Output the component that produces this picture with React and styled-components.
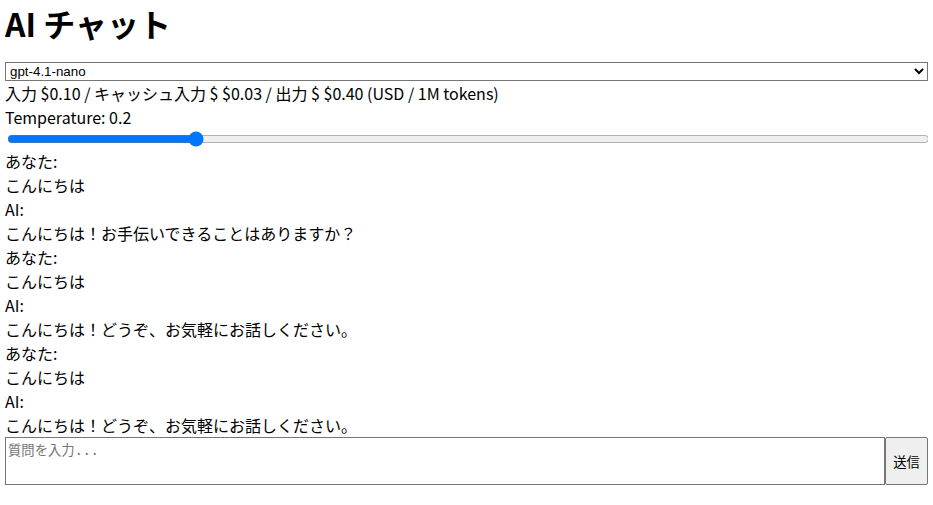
import React, { useState } from "react";
import styled, { createGlobalStyle } from "styled-components";

const GlobalStyle = createGlobalStyle`
  body {
    margin: 5px;
    font-family: "Noto Sans CJK JP", "Noto Sans", sans-serif;
    font-size: 16px;
    color: #000;
    background: #fff;
  }
`;

const Page = styled.div`
  display: flex;
  flex-direction: column;
`;

const Title = styled.h1`
  font-size: 32px;
  font-weight: 700;
  line-height: 36px;
  margin: 0 0 21px 0;
`;

const ModelSelect = styled.select`
  width: 100%;
  height: 19px;
  font-family: "Liberation Sans", Arial, sans-serif;
  font-size: 13.33px;
  border: 1px solid #767676;
  border-radius: 0;
  background: #fff;
  padding: 0;
`;

const Line = styled.div`
  line-height: 24px;
`;

const Slider = styled.input`
  width: 100%;
  margin: 2px;
  accent-color: #0075ff;
`;

const Chat = styled.div`
  height: 288px;
  overflow-y: auto;
`;

const Composer = styled.div`
  display: flex;
`;

const Input = styled.textarea`
  flex: 1;
  height: 48px;
  box-sizing: border-box;
  resize: none;
  border: 1px solid #767676;
  padding: 2px;
  font-family: "DejaVu Sans Mono", "Noto Sans CJK JP", monospace;
  font-size: 13.33px;
  &::placeholder {
    color: #757575;
  }
`;

const SendButton = styled.button`
  width: 43px;
  height: 48px;
  border: 1px solid #767676;
  border-radius: 2px;
  background: #efefef;
  font-family: "Noto Sans CJK JP", sans-serif;
  font-size: 13.33px;
  padding: 0;
`;

const messages = [
  { who: "あなた:", text: "こんにちは" },
  { who: "AI:", text: "こんにちは！お手伝いできることはありますか？" },
  { who: "あなた:", text: "こんにちは" },
  { who: "AI:", text: "こんにちは！どうぞ、お気軽にお話しください。" },
  { who: "あなた:", text: "こんにちは" },
  { who: "AI:", text: "こんにちは！どうぞ、お気軽にお話しください。" },
];

export default function App() {
  const [temp, setTemp] = useState(0.2);
  return (
    <Page>
      <GlobalStyle />
      <Title>AI チャット</Title>
      <ModelSelect defaultValue="gpt-4.1-nano">
        <option value="gpt-4.1-nano">gpt-4.1-nano</option>
        <option value="gpt-4.1-mini">gpt-4.1-mini</option>
        <option value="gpt-4.1">gpt-4.1</option>
      </ModelSelect>
      <Line>入力 $0.10 / キャッシュ入力 $ $0.03 / 出力 $ $0.40 (USD / 1M tokens)</Line>
      <Line>Temperature: {temp}</Line>
      <Slider
        type="range"
        min="0"
        max="1"
        step="0.1"
        value={temp}
        onChange={(e) => setTemp(Number(e.target.value))}
      />
      <Chat>
        {messages.map((m, i) => (
          <div key={i}>
            <Line>{m.who}</Line>
            <Line>{m.text}</Line>
          </div>
        ))}
      </Chat>
      <Composer>
        <Input placeholder="質問を入力..." />
        <SendButton>送信</SendButton>
      </Composer>
    </Page>
  );
}
